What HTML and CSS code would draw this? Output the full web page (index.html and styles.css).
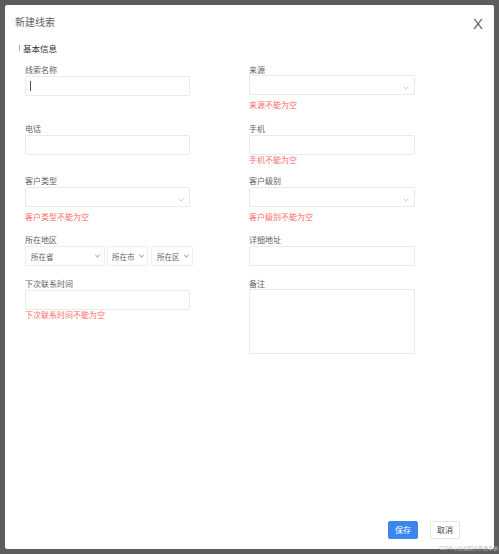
FILE: index.html
```html
<!DOCTYPE html>
<html lang="zh">
<head>
<meta charset="utf-8">
<title>新建线索</title>
<link rel="stylesheet" href="styles.css">
</head>
<body>
<div class="modal">
  <div class="header">
    <span class="title">新建线索</span>
    <span class="close">X</span>
  </div>
  <div class="section"><span class="bar"></span>基本信息</div>
  <div class="form">
    <div class="field">
      <div class="label">线索名称</div>
      <div class="input left"><span class="caret"></span></div>
    </div>
    <div class="field">
      <div class="label">来源</div>
      <div class="input select up"><svg class="arrow" viewBox="0 0 6 4" width="6" height="4"><path d="M0.5 0.5 L3 3 L5.5 0.5" fill="none" stroke="#c0c4cc" stroke-width="0.8"/></svg></div>
      <div class="err loose">来源不能为空</div>
    </div>

    <div class="field">
      <div class="label">电话</div>
      <div class="input left"></div>
    </div>
    <div class="field">
      <div class="label">手机</div>
      <div class="input"></div>
      <div class="err">手机不能为空</div>
    </div>

    <div class="field">
      <div class="label">客户类型</div>
      <div class="input left select"><svg class="arrow" viewBox="0 0 6 4" width="6" height="4"><path d="M0.5 0.5 L3 3 L5.5 0.5" fill="none" stroke="#c0c4cc" stroke-width="0.8"/></svg></div>
      <div class="err loose">客户类型不能为空</div>
    </div>
    <div class="field">
      <div class="label">客户级别</div>
      <div class="input select"><svg class="arrow" viewBox="0 0 6 4" width="6" height="4"><path d="M0.5 0.5 L3 3 L5.5 0.5" fill="none" stroke="#c0c4cc" stroke-width="0.8"/></svg></div>
      <div class="err loose">客户级别不能为空</div>
    </div>

    <div class="field">
      <div class="label">所在地区</div>
      <div class="region">
        <div class="nsel w80"><span>所在省</span><svg viewBox="0 0 6 4" width="5" height="4"><path d="M0.5 0.8 L3 3.2 L5.5 0.8" fill="none" stroke="#666" stroke-width="1"/></svg></div>
        <div class="nsel w41"><span>所在市</span><svg viewBox="0 0 6 4" width="5" height="4"><path d="M0.5 0.8 L3 3.2 L5.5 0.8" fill="none" stroke="#666" stroke-width="1"/></svg></div>
        <div class="nsel w42"><span>所在区</span><svg viewBox="0 0 6 4" width="5" height="4"><path d="M0.5 0.8 L3 3.2 L5.5 0.8" fill="none" stroke="#666" stroke-width="1"/></svg></div>
      </div>
    </div>
    <div class="field">
      <div class="label">详细地址</div>
      <div class="input"></div>
    </div>

    <div class="field">
      <div class="label">下次联系时间</div>
      <div class="input left"></div>
      <div class="err">下次联系时间不能为空</div>
    </div>
    <div class="field">
      <div class="label">备注</div>
      <div class="textarea"></div>
    </div>
  </div>
  <div class="footer">
    <button class="btn primary">保存</button>
    <button class="btn">取消</button>
  </div>
</div>
<div class="watermark">CSDN @后端程序开发手册</div>
</body>
</html>
```

FILE: styles.css
```css
html, body {
  margin: 0;
  padding: 0;
}
body {
  width: 499px;
  height: 554px;
  background: #5c5c5e;
  font-family: "Noto Sans CJK SC", "Noto Sans", sans-serif;
  overflow: hidden;
  position: relative;
}
.modal {
  position: absolute;
  left: 5px;
  top: 5px;
  width: 489px;
  height: 544px;
  background: #fff;
  border-radius: 2px;
  display: flex;
  flex-direction: column;
  box-sizing: border-box;
}
.header {
  height: 34px;
  display: flex;
  align-items: center;
  justify-content: space-between;
  padding: 0 11px 0 10px;
}
.title {
  font-size: 10px;
  line-height: 12px;
  color: #606266;
}
.close {
  font-family: "Liberation Sans", sans-serif;
  font-size: 15px;
  line-height: 16px;
  color: #666;
  margin-top: 4px;
}
.section {
  margin-top: 4px;
  padding-left: 14px;
  display: flex;
  align-items: center;
  font-size: 8.5px;
  line-height: 10px;
  color: #303133;
}
.bar {
  width: 1px;
  height: 6px;
  background: #9fb3ae;
  margin-right: 3px;
}
.form {
  flex: 1;
  margin-top: 12px;
  padding-left: 20px;
  display: grid;
  grid-template-columns: 224px 166px;
  grid-template-rows: 59px 52px 59px 44px auto;
  align-items: start;
}
.field {
  display: flex;
  flex-direction: column;
}
.label {
  font-size: 8px;
  line-height: 10px;
  height: 10px;
  color: #606266;
  margin-bottom: 1px;
}
.input {
  width: 166px;
  height: 20px;
  border: 1px solid #e8eaee;
  border-radius: 2px;
  box-sizing: border-box;
  display: flex;
  align-items: center;
  padding-left: 4px;
}
.input.left {
  width: 165px;
}
.input.up {
  margin-top: -1px;
}
.input.select {
  justify-content: flex-end;
  align-items: flex-end;
  padding: 0 5px 4px 0;
}
.arrow {
  display: block;
}
.caret {
  width: 1px;
  height: 10px;
  background: #555;
}
.err {
  font-size: 8px;
  line-height: 10px;
  color: #f56c6c;
  margin-top: 0;
}
.err.loose {
  margin-top: 5px;
}
.region {
  display: flex;
  gap: 2px;
}
.nsel {
  height: 20px;
  border: 1px solid #eceef1;
  border-radius: 2px;
  box-sizing: border-box;
  display: flex;
  align-items: center;
  justify-content: space-between;
  padding: 0 4px 0 5px;
  font-size: 7.5px;
  color: #606266;
}
.nsel svg {
  display: block;
  flex: none;
}
.w80 { width: 80px; }
.w41 { width: 41px; padding-left: 4px; padding-right: 3px; }
.w42 { width: 42px; margin-left: 1px; padding-right: 3px; }
.textarea {
  width: 166px;
  height: 65px;
  border: 1px solid #e8eaee;
  border-radius: 2px;
  box-sizing: border-box;
  margin-top: -1px;
}
.footer {
  display: flex;
  justify-content: flex-end;
  gap: 12px;
  padding: 0 34px 10px 0;
}
.btn {
  width: 30px;
  height: 18px;
  padding: 0;
  border: 1px solid #e6e6e6;
  border-radius: 2px;
  background: #fff;
  color: #444;
  font-family: "Noto Sans CJK SC", sans-serif;
  font-size: 8px;
  line-height: 16px;
}
.btn.primary {
  background: #3a86ef;
  border-color: #3a86ef;
  color: #fff;
}
.watermark {
  position: absolute;
  right: 1px;
  bottom: 3px;
  font-size: 5px;
  line-height: 6px;
  color: #b8b8b8;
}
```
